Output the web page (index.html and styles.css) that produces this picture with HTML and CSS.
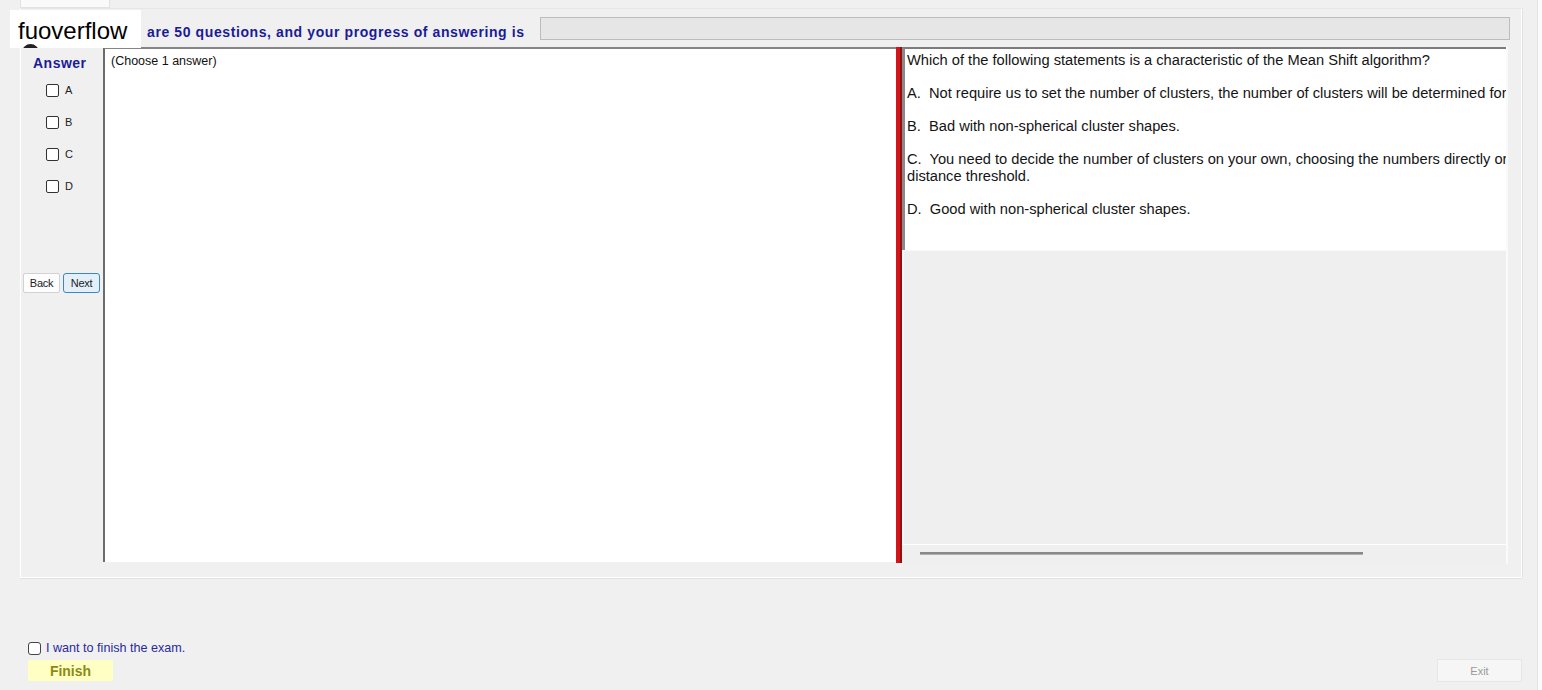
FILE: index.html
```html
<!DOCTYPE html>
<html lang="en">
<head>
<meta charset="utf-8">
<title>Exam</title>
<link rel="stylesheet" href="styles.css">
</head>
<body>
<div class="window">
  <div class="tabstrip"><div class="tab"></div></div>
  <div class="tabpanel">
    <div class="header">
      <div class="brand"><span class="brand-dot"></span><span class="brand-name">fuoverflow</span></div>
      <div class="progress-label">are 50 questions, and your progress of answering is</div>
      <div class="progress"></div>
    </div>
    <div class="workspace">
      <div class="answers">
        <div class="answers-title">Answer</div>
        <div class="choice"><span class="box"></span><span class="choice-letter">A</span></div>
        <div class="choice"><span class="box"></span><span class="choice-letter">B</span></div>
        <div class="choice"><span class="box"></span><span class="choice-letter">C</span></div>
        <div class="choice"><span class="box"></span><span class="choice-letter">D</span></div>
        <div class="nav">
          <button class="btn">Back</button>
          <button class="btn btn-focus">Next</button>
        </div>
      </div>
      <div class="notes">(Choose 1 answer)</div>
      <div class="splitter"></div>
      <div class="question-pane">
        <div class="question">
          <p>Which of the following statements is a characteristic of the Mean Shift algorithm?</p>
          <p>A.&nbsp; Not require us to set the number of clusters, the number of clusters will be determined for</p>
          <p>B.&nbsp; Bad with non-spherical cluster shapes.</p>
          <p>C.&nbsp; You need to decide the number of clusters on your own, choosing the numbers directly or<br>distance threshold.</p>
          <p>D.&nbsp; Good with non-spherical cluster shapes.</p>
        </div>
        <div class="pane-fill"></div>
        <div class="hscroll"><div class="hscroll-thumb"></div></div>
      </div>
    </div>
  </div>
  <div class="footer">
    <label class="confirm"><span class="box"></span><span>I want to finish the exam.</span></label>
    <div class="footer-actions">
      <button class="finish">Finish</button>
      <button class="exit">Exit</button>
    </div>
  </div>
</div>
</body>
</html>
```
FILE: styles.css
```css
* { box-sizing: border-box; }

html, body {
  margin: 0;
  padding: 0;
  background: #fbfbfb;
  font-family: "Liberation Sans", Arial, sans-serif;
}

.window {
  width: 1538px;
  height: 690px;
  background: #f0f0f0;
  display: flex;
  flex-direction: column;
  border-right: 1px solid #e4e4e4;
}

/* top tab strip */
.tabstrip {
  height: 8px;
  padding-left: 20px;
  display: flex;
}
.tab {
  width: 90px;
  height: 8px;
  background: #fafafa;
  border: 1px solid #e2e2e2;
  border-top: none;
}

/* main tab panel */
.tabpanel {
  margin-left: 20px;
  width: 1502px;
  height: 570px;
  border-left: 1px solid #ffffff;
  border-top: 1px solid #e6e6e6;
  border-bottom: 1px solid #ffffff;
  border-right: 1px solid #ffffff;
  box-shadow: 0 1px 0 #e2e2e2, 1px 0 0 #e2e2e2;
  display: flex;
  flex-direction: column;
}

.header {
  height: 38px;
  display: flex;
  align-items: center;
  position: relative;
  padding-left: 126px;
  padding-right: 11px;
}
.brand {
  position: absolute;
  left: -11px;
  top: 1px;
  width: 131px;
  height: 38px;
  background: #ffffff;
  overflow: hidden;
}
.brand-dot {
  position: absolute;
  left: 12px;
  top: 34px;
  width: 17px;
  height: 17px;
  border-radius: 50%;
  background: #222;
}
.brand-name {
  position: absolute;
  left: 8px;
  top: 7px;
  font-size: 24px;
  line-height: 28px;
  color: #000;
}
.progress-label {
  font-size: 14px;
  font-weight: bold;
  letter-spacing: 0.6px;
  color: #1b1b98;
  margin-top: 8px;
  white-space: nowrap;
}
.progress {
  margin-left: 15px;
  flex: 1;
  height: 23px;
  background: #e6e6e6;
  border: 1px solid #bcbcbc;
  margin-top: 1px;
}

.workspace {
  display: flex;
  height: 516px;
}

/* answer column */
.answers {
  width: 82px;
  display: flex;
  flex-direction: column;
  align-items: flex-start;
}
.answers-title {
  font-size: 14px;
  font-weight: bold;
  letter-spacing: 0.5px;
  color: #1b1b98;
  margin-top: 8px;
  margin-bottom: 3px;
  height: 16px;
  margin-left: 12px;
}
.choice {
  display: flex;
  align-items: center;
  height: 32px;
  margin-left: 25px;
}
.box {
  display: inline-block;
  width: 13px;
  height: 13px;
  border: 1px solid #333;
  border-radius: 2px;
  background: #fff;
}
.choice-letter {
  font-size: 11px;
  color: #222;
  margin-left: 6px;
}
.nav {
  margin-top: 71px;
  display: flex;
  gap: 3px;
  margin-left: 2px;
}
.btn {
  width: 37px;
  height: 20px;
  padding: 0;
  font-family: inherit;
  font-size: 11px;
  color: #222;
  background: #fdfdfd;
  border: 1px solid #d2d2d2;
  border-radius: 2px;
  letter-spacing: -0.3px;
}
.btn-focus {
  background: #e3f0fa;
  border-color: #3e86bf;
  border-radius: 3px;
}

/* notes area */
.notes {
  width: 793px;
  height: 515px;
  background: #ffffff;
  border-left: 2px solid #6c6c6c;
  border-top: 2px solid #858585;
  padding: 5px 0 0 6px;
  font-size: 12.5px;
  color: #111;
}

.splitter {
  width: 6px;
  height: 516px;
  background: #d4141b;
  border-right: 2px solid #8a1414;
}

/* question pane */
.question-pane {
  width: 606px;
  height: 517px;
  display: flex;
  flex-direction: column;
  border-right: 2px solid #fafafa;
}
.question {
  height: 203px;
  background: #fff;
  border-top: 2px solid #7c7c7c;
  border-left: 3px solid #8a8a8a;
  padding: 3px 0 0 2px;
  font-size: 14.67px;
  color: #141414;
  white-space: nowrap;
  overflow: hidden;
}
.question p {
  margin: 0 0 17px 0;
  line-height: 16px;
}
.question p:nth-child(4) { line-height: 17px; margin-bottom: 16px; }

.pane-fill {
  flex: 1;
  border-top: 1px solid #f8f8f8;
  border-left: 2px solid #f7f7f7;
  background: #efefef;
}
.hscroll {
  height: 20px;
  border-top: 1px solid #ffffff;
  background: #efefef;
  padding: 7px 0 0 18px;
}
.hscroll-thumb {
  width: 443px;
  height: 3px;
  background: #888;
  border-bottom: 1px solid #b0b0b0;
}

/* footer */
.footer {
  flex: 1;
  padding: 62px 15px 0 28px;
  display: flex;
  flex-direction: column;
}
.confirm {
  display: flex;
  align-items: center;
  gap: 5px;
  font-size: 12.6px;
  color: #2a2a9c;
  height: 16px;
}
.confirm .box { width: 13px; height: 13px; border-radius: 3px; border-color: #444; }
.footer-actions {
  display: flex;
  justify-content: space-between;
  margin-top: 4px;
}
.finish {
  width: 85px;
  height: 21px;
  background: #ffffc4;
  border: none;
  padding: 0;
  font-family: inherit;
  font-size: 14px;
  font-weight: bold;
  color: #8b8b14;
}
.exit {
  width: 85px;
  height: 23px;
  margin-top: -1px;
  background: #f6f6f6;
  border: 1px solid #e6e6e6;
  padding: 0;
  font-family: inherit;
  font-size: 11px;
  color: #9a9a9a;
}
```
